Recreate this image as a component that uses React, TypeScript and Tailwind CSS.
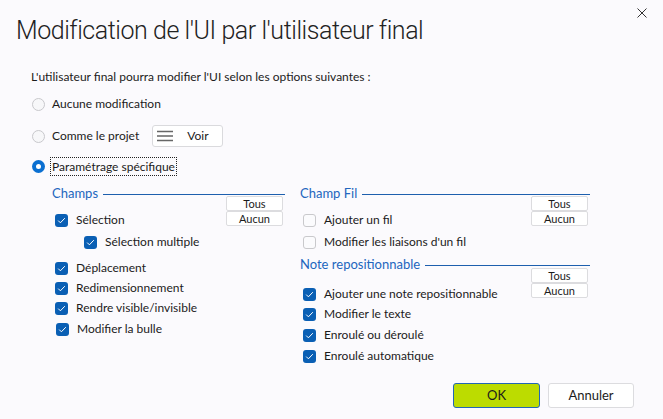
import React from 'react';

const font = { fontFamily: 'Lato, "Noto Sans", sans-serif' };

function Check({ checked }: { checked: boolean }) {
  if (!checked) {
    return <span className="w-[13px] h-[13px] rounded-[3px] border border-[#c9c9cc] bg-[#fbfbfd] shrink-0" />;
  }
  return (
    <span className="w-[13px] h-[13px] rounded-[3px] bg-[#0a5fb4] shrink-0 flex items-center justify-center">
      <svg width="9" height="9" viewBox="0 0 9 9" fill="none">
        <path d="M1.2 4.6 L3.4 6.8 L7.8 2.2" stroke="white" strokeWidth="1" />
      </svg>
    </span>
  );
}

function Item({ label, checked, className = '' }: { label: string; checked: boolean; className?: string }) {
  return (
    <div className={`flex items-center gap-[8px] h-[20px] ${className}`}>
      <Check checked={checked} />
      <span>{label}</span>
    </div>
  );
}

function Radio({ selected }: { selected?: boolean }) {
  if (selected) {
    return (
      <span className="w-[13px] h-[13px] rounded-full bg-[#0a6fd1] flex items-center justify-center shrink-0">
        <span className="w-[5px] h-[5px] rounded-full bg-white" />
      </span>
    );
  }
  return <span className="w-[13px] h-[13px] rounded-full border border-[#c8c8cc] bg-[#f7f7f9] shrink-0" />;
}

function GroupHeader({ title }: { title: string }) {
  return (
    <div className="flex items-center gap-[5px] h-[14px]">
      <span className="text-[#2266be] text-[13px]">{title}</span>
      <div className="flex-1 h-px bg-[#1d5fae]" />
    </div>
  );
}

function SmallBtn({ label }: { label: string }) {
  return (
    <div className="w-[57px] h-[15px] border border-[#dcdcdf] bg-white rounded-[2px] text-[11px] leading-[13px] text-center">
      {label}
    </div>
  );
}

function Pair() {
  return (
    <div className="flex flex-col">
      <SmallBtn label="Tous" />
      <SmallBtn label="Aucun" />
    </div>
  );
}

export default function App() {
  return (
    <div className="w-[663px] h-[419px] bg-[#fbfafd] text-[#1b1b1b] text-[12px] flex flex-col" style={font}>
      <div className="flex justify-between">
        <h1
          className="pl-[16px] pt-[14px] text-[25px] font-light leading-[34px] tracking-[-0.45px] text-[#222]"
          style={{ fontFamily: 'Roboto, Lato, sans-serif' }}
        >
          Modification de l'UI par l'utilisateur final
        </h1>
        <svg className="mt-[8px] mr-[16px]" width="10" height="10" viewBox="0 0 10 10">
          <path d="M0.5 0.5 L9.5 9.5 M9.5 0.5 L0.5 9.5" stroke="#333" strokeWidth="1" />
        </svg>
      </div>

      <div className="pl-[31px] mt-[21px] leading-[16px]">
        L'utilisateur final pourra modifier l'UI selon les options suivantes :
      </div>

      <div className="pl-[32px] mt-[11px] flex items-center gap-[7px] h-[16px]">
        <Radio />
        <span>Aucune modification</span>
      </div>
      <div className="pl-[32px] mt-[13px] flex items-center gap-[7px] h-[22px]">
        <Radio />
        <span>Comme le projet</span>
        <div className="ml-[6px] w-[71px] h-[22px] border border-[#dadadd] rounded-[3px] bg-white flex items-center">
          <svg className="ml-[4px]" width="16" height="12" viewBox="0 0 16 12">
            <path d="M0 1.5 H16 M0 6 H16 M0 10.5 H16" stroke="#666" strokeWidth="1.6" />
          </svg>
          <span className="ml-[14px]">Voir</span>
        </div>
      </div>
      <div className="pl-[32px] mt-[9px] flex items-center gap-[5px] h-[20px]">
        <Radio selected />
        <span className="border border-dotted border-[#222] px-[1px] leading-[17px]">Paramétrage spécifique</span>
      </div>

      <div className="flex pl-[52px] mt-[11px] gap-[15px]">
        <div className="w-[233px] flex flex-col">
          <GroupHeader title="Champs" />
          <div className="flex justify-between">
            <div className="flex flex-col mt-[9px] pl-[3px]">
              <Item label="Sélection" checked />
              <Item label="Sélection multiple" checked className="ml-[29px] mt-[2px]" />
              <Item label="Déplacement" checked className="mt-[6px]" />
              <Item label="Redimensionnement" checked />
              <Item label="Rendre visible/invisible" checked />
              <Item label="Modifier la bulle" checked className="mt-[1px] ml-[1px]" />
            </div>
            <div className="mt-[-5px] mr-[2px]">
              <Pair />
            </div>
          </div>
        </div>

        <div className="w-[290px] flex flex-col">
          <GroupHeader title="Champ Fil" />
          <div className="flex justify-between">
            <div className="flex flex-col mt-[9px] pl-[3px]">
              <Item label="Ajouter un fil" checked={false} />
              <Item label="Modifier les liaisons d'un fil" checked={false} className="mt-[2px]" />
            </div>
            <div className="mt-[-5px] mr-[2px]">
              <Pair />
            </div>
          </div>
          <div className="mt-[6px]">
            <GroupHeader title="Note repositionnable" />
          </div>
          <div className="flex justify-between">
            <div className="flex flex-col mt-[12px] pl-[3px]">
              <Item label="Ajouter une note repositionnable" checked />
              <Item label="Modifier le texte" checked />
              <Item label="Enroulé ou déroulé" checked className="mt-[1px]" />
              <Item label="Enroulé automatique" checked className="mt-[1px]" />
            </div>
            <div className="mt-[-4px] mr-[2px]">
              <Pair />
            </div>
          </div>
        </div>
      </div>

      <div className="mt-auto mb-[11px] flex justify-end gap-[8px] pr-[29px]">
        <button className="w-[87px] h-[25px] rounded-[3px] bg-[#bcdc00] border border-[#2367b5] text-[13px]">OK</button>
        <button className="w-[86px] h-[25px] rounded-[3px] bg-white border border-[#dcdcdf] text-[13px]">Annuler</button>
      </div>
    </div>
  );
}
